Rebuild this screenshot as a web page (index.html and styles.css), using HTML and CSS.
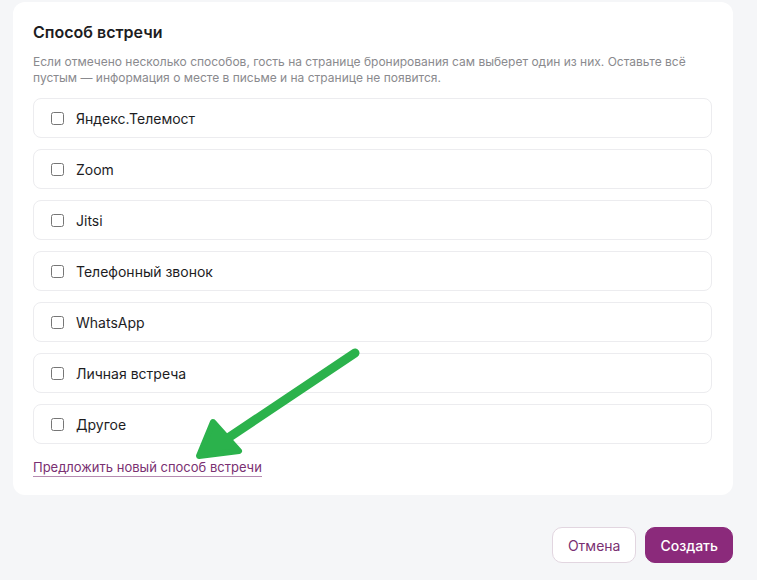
FILE: index.html
```html
<!DOCTYPE html>
<html lang="ru">
<head>
    <meta charset="UTF-8">
    <meta name="viewport" content="width=device-width, initial-scale=1.0">
    <title>Способ встречи</title>
    <link rel="stylesheet" href="styles.css">
</head>
<body>
    <div class="page">
        <div class="card">
            <h2>Способ встречи</h2>
            <p class="hint">Если отмечено несколько способов, гость на странице бронирования сам выберет один из них. Оставьте всё пустым — информация о месте в письме и на странице не появится.</p>
            <div class="options">
                <label class="option"><input type="checkbox"><span>Яндекс.Телемост</span></label>
                <label class="option"><input type="checkbox"><span>Zoom</span></label>
                <label class="option"><input type="checkbox"><span>Jitsi</span></label>
                <label class="option"><input type="checkbox"><span>Телефонный звонок</span></label>
                <label class="option"><input type="checkbox"><span>WhatsApp</span></label>
                <label class="option"><input type="checkbox"><span>Личная встреча</span></label>
                <label class="option"><input type="checkbox"><span>Другое</span></label>
            </div>
            <a class="suggest" href="#">Предложить новый способ встречи</a>
        </div>
        <div class="actions">
            <button class="btn btn-cancel">Отмена</button>
            <button class="btn btn-create">Создать</button>
        </div>
    </div>

    <svg class="arrow" width="757" height="580" viewBox="0 0 757 580">
        <line x1="355" y1="353" x2="228" y2="438" stroke="#2bb24c" stroke-width="9" stroke-linecap="round"/>
        <polygon points="199,456 213,422 239,451" fill="#2bb24c" stroke="#2bb24c" stroke-width="6" stroke-linejoin="round"/>
    </svg>
</body>
</html>
```

FILE: styles.css
```css
body {
    margin: 0;
    background: #f5f6f8;
    font-family: Inter, "Noto Sans", sans-serif;
    color: #1d1d1f;
}
.page {
    width: 720px;
    margin-left: 13px;
}
.card {
    margin-top: 2px;
    background: #fff;
    border-radius: 12px;
    padding: 20px 21px 18px 20px;
}
.card h2 {
    margin: 0;
    font-size: 16px;
    font-weight: 600;
    line-height: 20px;
}
.hint {
    margin: 12px 0 12px;
    font-size: 12px;
    line-height: 16px;
    color: #8a8a8e;
}
.options {
    display: flex;
    flex-direction: column;
    gap: 11px;
}
.option {
    display: flex;
    align-items: center;
    height: 38px;
    padding: 0 17px;
    border: 1px solid #ececef;
    border-radius: 8px;
    font-size: 14px;
    cursor: pointer;
}
.option input {
    width: 13px;
    height: 13px;
    margin: 0 12px 0 0;
    accent-color: #8b2c7d;
}
.suggest {
    display: inline-block;
    margin-top: 14px;
    font-size: 13px;
    line-height: 18px;
    color: #7a3072;
    text-decoration: none;
    border-bottom: 1px solid #b58bb0;
}
.actions {
    display: flex;
    justify-content: flex-end;
    gap: 9px;
    margin-top: 32px;
}
.btn {
    height: 36px;
    padding: 0 15px;
    border-radius: 10px;
    font-family: Inter, "Noto Sans", sans-serif;
    font-size: 14px;
    cursor: pointer;
}
.btn-cancel {
    background: #fff;
    border: 1px solid #e2d6e0;
    color: #7a3072;
}
.btn-create {
    background: #8b2a7b;
    border: 1px solid #8b2a7b;
    color: #fff;
    font-weight: 500;
    padding: 0 14px;
}
.arrow {
    position: absolute;
    top: 0;
    left: 0;
    pointer-events: none;
}
```
